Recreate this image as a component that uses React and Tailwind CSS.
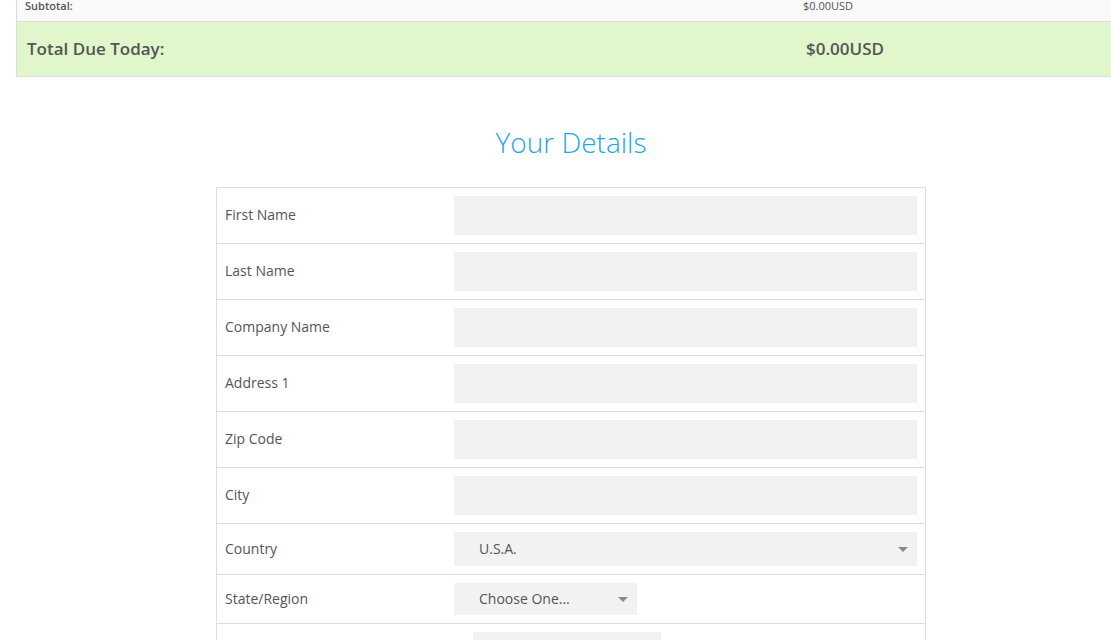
import React from "react";

const fields = ["First Name", "Last Name", "Company Name", "Address 1", "Zip Code", "City"];

const Arrow = () => (
  <span className="w-0 h-0 border-l-[5px] border-r-[5px] border-t-[5px] border-l-transparent border-r-transparent border-t-[#8a8a8a]" />
);

const App = () => {
  return (
    <div
      className="w-[1111px] h-[640px] overflow-hidden bg-white text-[#555]"
      style={{ fontFamily: '"Open Sans", "Liberation Sans", sans-serif' }}
    >
      {/* order summary */}
      <div className="ml-[16px] w-[1110px] border-l border-r border-b border-[#ddd]">
        <div className="-mt-[9px] h-[31px] flex items-center bg-[#fafafa] border-b border-[#ddd] text-[11px] font-semibold">
          <div className="w-[786px] flex-none pl-[8px]">Subtotal:</div>
          <div className="font-normal">$0.00USD</div>
        </div>
        <div className="h-[54px] flex items-center bg-[#dff7cb] text-[17px] font-semibold">
          <div className="w-[789px] flex-none pl-[10px]">Total Due Today:</div>
          <div>$0.00USD</div>
        </div>
      </div>

      {/* your details */}
      <h2 className="mt-[48px] ml-[16px] w-[1110px] text-center text-[28px] font-light leading-[34px] text-[#22a7ec]">
        Your Details
      </h2>

      <div className="mt-[28px] ml-[216px] w-[710px] border-t border-l border-r border-[#ddd] text-[14px]">
        {fields.map((f) => (
          <div key={f} className="flex items-center h-[56px] border-b border-[#ddd] px-[8px]">
            <div className="w-[229px] flex-none pb-[2px]">{f}</div>
            <div className="flex-1 h-[39px] bg-[#f2f2f2]" />
          </div>
        ))}
        <div className="flex items-center h-[51px] border-b border-[#ddd] px-[8px]">
          <div className="w-[229px] flex-none pb-[2px]">Country</div>
          <div className="flex-1 h-[34px] bg-[#f2f2f2] flex items-center justify-between pl-[25px] pr-[9px]">
            <span className="pb-[2px]">U.S.A.</span>
            <Arrow />
          </div>
        </div>
        <div className="flex items-center h-[49px] border-b border-[#ddd] px-[8px]">
          <div className="w-[229px] flex-none pb-[2px]">State/Region</div>
          <div className="w-[183px] h-[32px] bg-[#f2f2f2] flex items-center justify-between pl-[25px] pr-[9px]">
            <span className="pb-[2px]">Choose One...</span>
            <Arrow />
          </div>
        </div>
        <div className="flex h-[56px] pt-[8px] px-[8px]">
          <div className="w-[248px] flex-none" />
          <div className="w-[188px] h-[39px] bg-[#f2f2f2]" />
        </div>
      </div>
    </div>
  );
};

export default App;
